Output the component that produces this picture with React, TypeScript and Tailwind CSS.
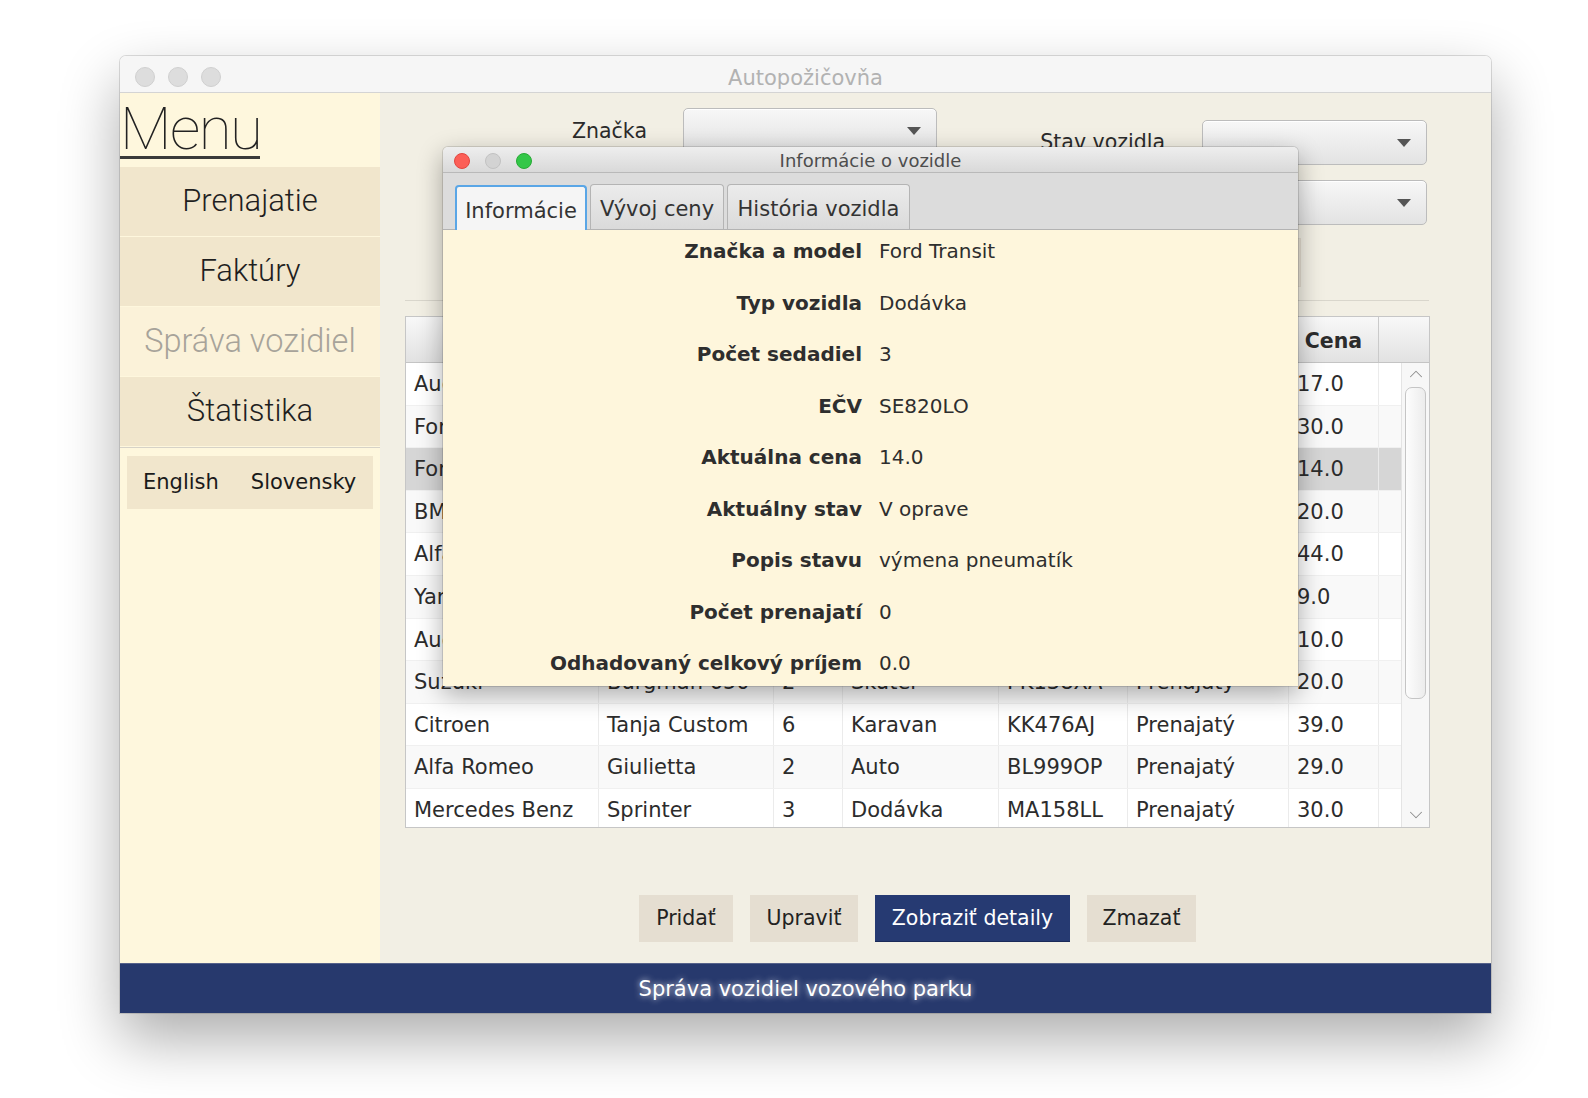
import React from "react";
import { ChevronUp, ChevronDown } from "lucide-react";

const rows: string[][] = [
  ["Audi", "A4 Avant", "5", "Auto", "BA215KL", "Voľný", "17.0"],
  ["Ford", "Focus", "5", "Auto", "KE112AB", "Voľný", "30.0"],
  ["Ford", "Transit", "3", "Dodávka", "SE820LO", "V oprave", "14.0"],
  ["BMW", "X5", "5", "Auto", "BA777XY", "Voľný", "20.0"],
  ["Alfa Romeo", "Stelvio", "5", "Auto", "NR451CC", "Voľný", "44.0"],
  ["Yamaha", "MT-07", "2", "Motorka", "TT903MM", "Voľný", "9.0"],
  ["Audi", "A3", "5", "Auto", "ZA654BB", "Voľný", "10.0"],
  ["Suzuki", "Burgman 650", "2", "Skúter", "PK138XA", "Prenajatý", "20.0"],
  ["Citroen", "Tanja Custom", "6", "Karavan", "KK476AJ", "Prenajatý", "39.0"],
  ["Alfa Romeo", "Giulietta", "2", "Auto", "BL999OP", "Prenajatý", "29.0"],
  ["Mercedes Benz", "Sprinter", "3", "Dodávka", "MA158LL", "Prenajatý", "30.0"],
];

const headers = ["Značka", "Model", "Sedadlá", "Typ", "EČV", "Stav", "Cena"];
const widths = ["w-[193px]", "w-[175px]", "w-[69px]", "w-[156px]", "w-[129px]", "w-[161px]", "w-[90px]"];

const info: [string, string][] = [
  ["Značka a model", "Ford Transit"],
  ["Typ vozidla", "Dodávka"],
  ["Počet sedadiel", "3"],
  ["EČV", "SE820LO"],
  ["Aktuálna cena", "14.0"],
  ["Aktuálny stav", "V oprave"],
  ["Popis stavu", "výmena pneumatík"],
  ["Počet prenajatí", "0"],
  ["Odhadovaný celkový príjem", "0.0"],
];

function Combo({ w }: { w: string }) {
  return (
    <div
      className={`${w} h-[45px] rounded-[5px] border border-[#bcbcbc] bg-linear-to-b from-[#f7f7f7] to-[#e3e3e3] flex items-center justify-end pr-[15px] shadow-[inset_0_1px_0_#ffffff]`}
    >
      <svg width="14" height="8" viewBox="0 0 14 8">
        <polygon points="0,0 14,0 7,8" fill="#555555" />
      </svg>
    </div>
  );
}

export default function App() {
  return (
    <div className="w-[1588px] h-[1098px] bg-white pl-[120px] pt-[56px] font-['DejaVu_Sans',sans-serif] text-[#2b2b2b]">
      <div className="w-[1371px] h-[957px] flex flex-col rounded-t-[6px] overflow-hidden shadow-[0_0_0_1px_rgba(0,0,0,0.13),0_26px_60px_rgba(0,0,0,0.33)]">
        {/* title bar */}
        <div className="h-[37px] shrink-0 pt-[4px] bg-[#f6f6f6] border-b border-[#d4d4d4] grid grid-cols-[1fr_auto_1fr] items-center">
          <div className="flex items-center pl-[15px] gap-[13px]">
            <div className="w-[20px] h-[20px] rounded-full bg-[#dddddd] border border-[#d0d0d0]" />
            <div className="w-[20px] h-[20px] rounded-full bg-[#dddddd] border border-[#d0d0d0]" />
            <div className="w-[20px] h-[20px] rounded-full bg-[#dddddd] border border-[#d0d0d0]" />
          </div>
          <div className="pt-[3px] text-[21px] text-[#b2b2b2]">Autopožičovňa</div>
          <div />
        </div>

        {/* body */}
        <div className="h-[870px] shrink-0 flex">
          {/* sidebar */}
          <div className="w-[260px] shrink-0 bg-[#fef7dd] flex flex-col">
            <div className="h-[74px] pt-[6px] font-['Roboto',sans-serif]">
              <div className="h-[57px] text-[60px] leading-[60px] font-thin tracking-[-1.5px] text-[#222222] whitespace-nowrap">
                Menu
              </div>
              <div className="w-[140px] h-[3px] bg-[#3a3a3a]" />
            </div>
            <div className="flex flex-col gap-[1px] font-['Roboto',sans-serif]">
              {["Prenajatie", "Faktúry", "Správa vozidiel", "Štatistika"].map((t) => (
                <div
                  key={t}
                  className={`h-[69px] flex items-center justify-center font-light ${
                    t === "Správa vozidiel"
                      ? "bg-[#fbf2d9] text-[#a7a39a] text-[32.5px]"
                      : "bg-[#f1e6cc] text-[#1f1f1f] text-[31px]"
                  }`}
                >
                  {t}
                </div>
              ))}
            </div>
            <div className="mt-[1px] h-px bg-[#d6d2c7]" />
            <div className="mt-[8px] mx-[7px] h-[53px] bg-[#f1e6cc] flex items-center pl-[16px] gap-[32px] text-[21px] text-[#1a1a1a]">
              <span>English</span>
              <span>Slovensky</span>
            </div>
          </div>

          {/* main */}
          <div className="relative flex-1 bg-[#f2efe4] pl-[25px] flex flex-col">
            <div className="h-[207px] shrink-0 flex items-start">
              <div className="ml-[167px] mt-[15px] grid grid-cols-[auto_254px] gap-x-[36px] gap-y-[15px] items-center text-[20.5px]">
                <div className="text-right pt-[1px]">Značka</div>
                <Combo w="w-[254px]" />
                <div className="text-right">Model</div>
                <Combo w="w-[254px]" />
              </div>
              <div className="ml-[100px] mt-[27px] grid grid-cols-[128px_225px] gap-x-[37px] gap-y-[15px] items-center text-[20.5px]">
                <div className="text-right whitespace-nowrap">Stav vozidla</div>
                <Combo w="w-[225px]" />
                <div className="text-right whitespace-nowrap">Typ</div>
                <Combo w="w-[225px]" />
                <div />
                <div className="-mt-[2px] w-[99px] h-[49px] bg-[#e9e3d6] border border-[#e2dccf]" />
              </div>
            </div>
            <div className="w-[1024px] h-px bg-[#d9d6cc]" />

            {/* table */}
            <div className="mt-[15px] w-[1025px] border border-[#c6c6c6] bg-white text-[21px] text-[#2c2c2c]">
              <div className="h-[46px] flex bg-linear-to-b from-[#f8f8f8] to-[#e2e2e2] border-b border-[#c4c4c4]">
                {headers.map((h, j) => (
                  <div
                    key={h}
                    className={`${widths[j]} shrink-0 pt-[3px] flex items-center justify-center font-bold border-r border-[#cacaca] whitespace-nowrap text-[20.5px]`}
                  >
                    {h}
                  </div>
                ))}
                <div className="flex-1" />
              </div>
              <div className="flex h-[464px] overflow-hidden">
                <div className="flex-1 flex flex-col">
                  {rows.map((r, i) => (
                    <div
                      key={i}
                      className={`h-[42.6px] shrink-0 flex border-b border-[#f0f0f0] ${
                        i === 2 ? "bg-[#d6d6d6]" : i % 2 === 1 ? "bg-[#f9f9f9]" : "bg-white"
                      }`}
                    >
                      {r.map((c, j) => (
                        <div
                          key={j}
                          className={`${widths[j]} shrink-0 px-[8px] pt-[2px] flex items-center border-r border-[#ebebeb] whitespace-nowrap overflow-hidden`}
                        >
                          {c}
                        </div>
                      ))}
                      <div className="flex-1" />
                    </div>
                  ))}
                </div>
                <div className="w-[28px] shrink-0 bg-[#f7f7f7] border-l border-[#e4e4e4] flex flex-col items-center pb-[1px]">
                  <ChevronUp size={22} strokeWidth={1.1} color="#8c8c8c" />
                  <div className="mt-[2px] w-[21px] h-[312px] rounded-[7px] border border-[#c5c5c5] bg-linear-to-r from-[#fdfdfd] to-[#ececec]" />
                  <div className="flex-1" />
                  <ChevronDown size={22} strokeWidth={1.1} color="#8c8c8c" />
                </div>
              </div>
            </div>

            {/* buttons */}
            <div className="mt-[67px] w-[1025px] flex justify-center gap-[17px] text-[20.5px]">
              <div className="w-[94px] h-[47px] flex items-center justify-center bg-[#e5ded1] text-[#222222]">Pridať</div>
              <div className="w-[108px] h-[47px] flex items-center justify-center bg-[#e5ded1] text-[#222222]">Upraviť</div>
              <div className="w-[195px] h-[47px] flex items-center justify-center bg-[#263a72] text-white border-b border-[#1a2a58]">
                Zobraziť detaily
              </div>
              <div className="w-[109px] h-[47px] flex items-center justify-center bg-[#e5ded1] text-[#222222]">Zmazať</div>
            </div>

            {/* dialog */}
            <div className="absolute left-[63px] top-[54px] w-[855px] h-[539px] flex flex-col rounded-t-[5px] overflow-hidden shadow-[0_0_0_1px_rgba(0,0,0,0.12),0_8px_26px_rgba(0,0,0,0.33)]">
              <div className="h-[26px] shrink-0 bg-linear-to-b from-[#eeeeee] to-[#d9d9d9] border-b border-[#b9b9b9] grid grid-cols-[1fr_auto_1fr] items-center">
                <div className="flex items-center pl-[11px] gap-[15px]">
                  <div className="w-[16px] h-[16px] rounded-full bg-[#fc5f57] border border-[#e2463f]" />
                  <div className="w-[16px] h-[16px] rounded-full bg-[#d3d3d3] border border-[#c2c2c2]" />
                  <div className="w-[16px] h-[16px] rounded-full bg-[#33c748] border border-[#27aa35]" />
                </div>
                <div className="text-[18px] text-[#4d4d4d]">Informácie o vozidle</div>
                <div />
              </div>
              <div className="h-[57px] shrink-0 bg-[#dcdcdc] border-b border-[#b3b3b3] flex items-end pl-[12px] gap-[3px] text-[21px] text-[#333333]">
                <div className="w-[132px] h-[45px] -mb-px pt-[6px] rounded-t-[4px] border-2 border-b-0 border-[#5aa6e6] bg-[#f5f5f5] flex items-center justify-center">
                  Informácie
                </div>
                <div className="w-[134px] h-[45px] pt-[6px] rounded-t-[4px] border border-b-0 border-[#b4b4b4] bg-linear-to-b from-[#ececec] to-[#dadada] flex items-center justify-center">
                  Vývoj ceny
                </div>
                <div className="w-[183px] h-[45px] pt-[6px] rounded-t-[4px] border border-b-0 border-[#b4b4b4] bg-linear-to-b from-[#ececec] to-[#dadada] flex items-center justify-center">
                  História vozidla
                </div>
              </div>
              <div className="flex-1 pt-[1px] bg-[#fef6dc] grid grid-cols-[419px_1fr] gap-x-[17px] gap-y-[11.5px] auto-rows-[40px] content-start text-[20px] text-[#2e2e2e]">
                {info.map(([k, v]) => (
                  <React.Fragment key={k}>
                    <div className="flex items-center justify-end font-bold whitespace-nowrap">{k}</div>
                    <div className="flex items-center whitespace-nowrap">{v}</div>
                  </React.Fragment>
                ))}
              </div>
            </div>
          </div>
        </div>

        {/* status bar */}
        <div className="h-[50px] shrink-0 pt-[3px] bg-[#27396d] border-t border-[#56628a] flex items-center justify-center text-[21px] text-white [text-shadow:0_0_6px_rgba(255,255,255,0.9)]">
          Správa vozidiel vozového parku
        </div>
      </div>
    </div>
  );
}
